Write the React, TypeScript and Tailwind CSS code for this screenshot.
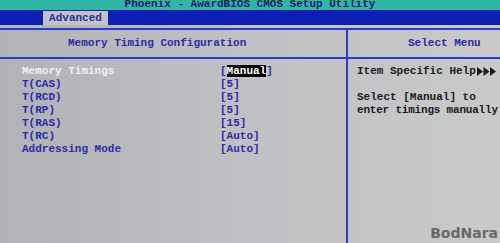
import React from "react";

const mono = { fontFamily: '"Liberation Mono", "DejaVu Sans Mono", monospace' };

const rows: { label: string; value: string; selected?: boolean }[] = [
  { label: "Memory Timings", value: "Manual", selected: true },
  { label: "T(CAS)", value: "5" },
  { label: "T(RCD)", value: "5" },
  { label: "T(RP)", value: "5" },
  { label: "T(RAS)", value: "15" },
  { label: "T(RC)", value: "Auto" },
  { label: "Addressing Mode", value: "Auto" },
];

export default function App() {
  return (
    <div
      className="relative w-[500px] h-[243px] overflow-hidden font-bold text-[11px] leading-[13px]"
      style={mono}
    >
      {/* title bar */}
      <div className="h-[10px] bg-[#2fb6a6] flex items-end justify-center overflow-hidden">
        <span className="text-[#102060] leading-[11px] whitespace-pre">Phoenix - AwardBIOS CMOS Setup Utility</span>
      </div>
      {/* menu bar */}
      <div className="h-[15px] bg-[#0d1fb2] flex items-end">
        <div className="ml-[43px] w-[65px] h-[14px] bg-[#c2c3c6] text-[#2a2ca0] flex items-center justify-center leading-[13px]">
          Advanced
        </div>
      </div>
      {/* body */}
      <div className="h-[218px] bg-gradient-to-r from-[#b1b2b7] via-[#c0c1c4] to-[#c8c9c8] pt-[3px]">
        <div className="border-t-2 border-[#2b3bc8] h-full grid grid-cols-[348px_1fr]">
          <div className="border-r-2 border-[#2b3bc8] flex flex-col">
            <div className="h-[29px] border-b-2 border-[#2b3bc8] flex items-center pl-[68px] text-[#2a2ca5] whitespace-pre">
              Memory Timing Configuration
            </div>
            <div className="pt-[6px] flex flex-col">
              {rows.map((r) => (
                <div key={r.label} className="flex h-[13px] whitespace-pre">
                  <span
                    className={`pl-[22px] w-[220px] ${r.selected ? "text-[#f0f0f4]" : "text-[#2a2ca5]"}`}
                  >
                    {r.label}
                  </span>
                  <span className="text-[#2a2ca5]">
                    [
                    {r.selected ? (
                      <span className="bg-black text-white">{r.value}</span>
                    ) : (
                      r.value
                    )}
                    ]
                  </span>
                </div>
              ))}
            </div>
          </div>
          <div className="flex flex-col overflow-hidden">
            <div className="h-[29px] border-b-2 border-[#2b3bc8] flex items-center pl-[60px] text-[#2a2ca5] whitespace-pre">
              Select Menu
            </div>
            <div className="pt-[6px] pl-[9px] text-[#1a1a22] whitespace-pre flex flex-col">
              <div className="h-[13px] flex items-center">
                Item Specific Help
                <svg width="20" height="9" viewBox="0 0 20 9" className="ml-[1px]">
                  <path d="M0 0 L6 4.5 L0 9 Z M6.5 0 L12.5 4.5 L6.5 9 Z M13 0 L19 4.5 L13 9 Z" fill="#1a1a22" />
                </svg>
              </div>
              <div className="h-[13px]" />
              <div className="h-[13px]">Select [Manual] to</div>
              <div className="h-[13px] tracking-[-0.2px]">enter timings manually</div>
            </div>
          </div>
        </div>
      </div>
      {/* watermark */}
      <div
        className="absolute right-[2px] bottom-[2px] text-[#68686a] text-[14px] leading-[16px] font-bold"
        style={{ fontFamily: '"DejaVu Sans", sans-serif' }}
      >
        BodNara
      </div>
    </div>
  );
}
